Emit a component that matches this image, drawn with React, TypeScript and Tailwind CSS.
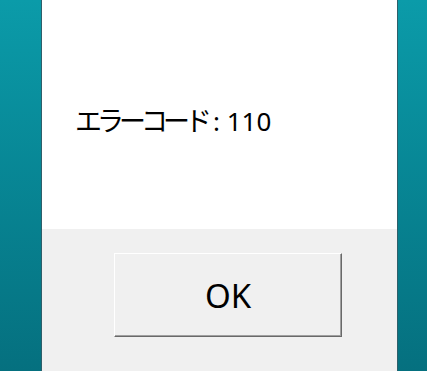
import React from 'react';

const font = { fontFamily: '"Noto Sans", "Noto Sans CJK JP", sans-serif' };

const App: React.FC = () => {
  return (
    <div className="flex h-[371px] w-[427px] overflow-hidden" style={font}>
      <div className="w-[42px] border-r border-[#2f5f6a] bg-gradient-to-b from-[#0b9ba9] to-[#05707f]" />
      <div className="flex w-[355px] flex-col">
        <div className="flex h-[229px] items-center bg-white pl-[33px] pt-[12px]">
          <span className="text-[26px] leading-none text-black">
            <span className="text-[27px] tracking-[-5px]">エラーコード</span>
            <span className="pl-[6px]">: 110</span>
          </span>
        </div>
        <div className="flex-1 bg-[#f0f0f0] pl-[72px] pt-[24px]">
          <button className="flex h-[84px] w-[228px] items-center justify-center border border-t-white border-l-white border-r-[#696969] border-b-[#696969] bg-[#f0f0f0] text-[33px] leading-none text-black shadow-[inset_-1px_-1px_0_#a0a0a0]">
            OK
          </button>
        </div>
      </div>
      <div className="flex-1 border-l border-[#2f5f6a] bg-gradient-to-b from-[#0b9ba9] to-[#05707f]" />
    </div>
  );
};

export default App;
